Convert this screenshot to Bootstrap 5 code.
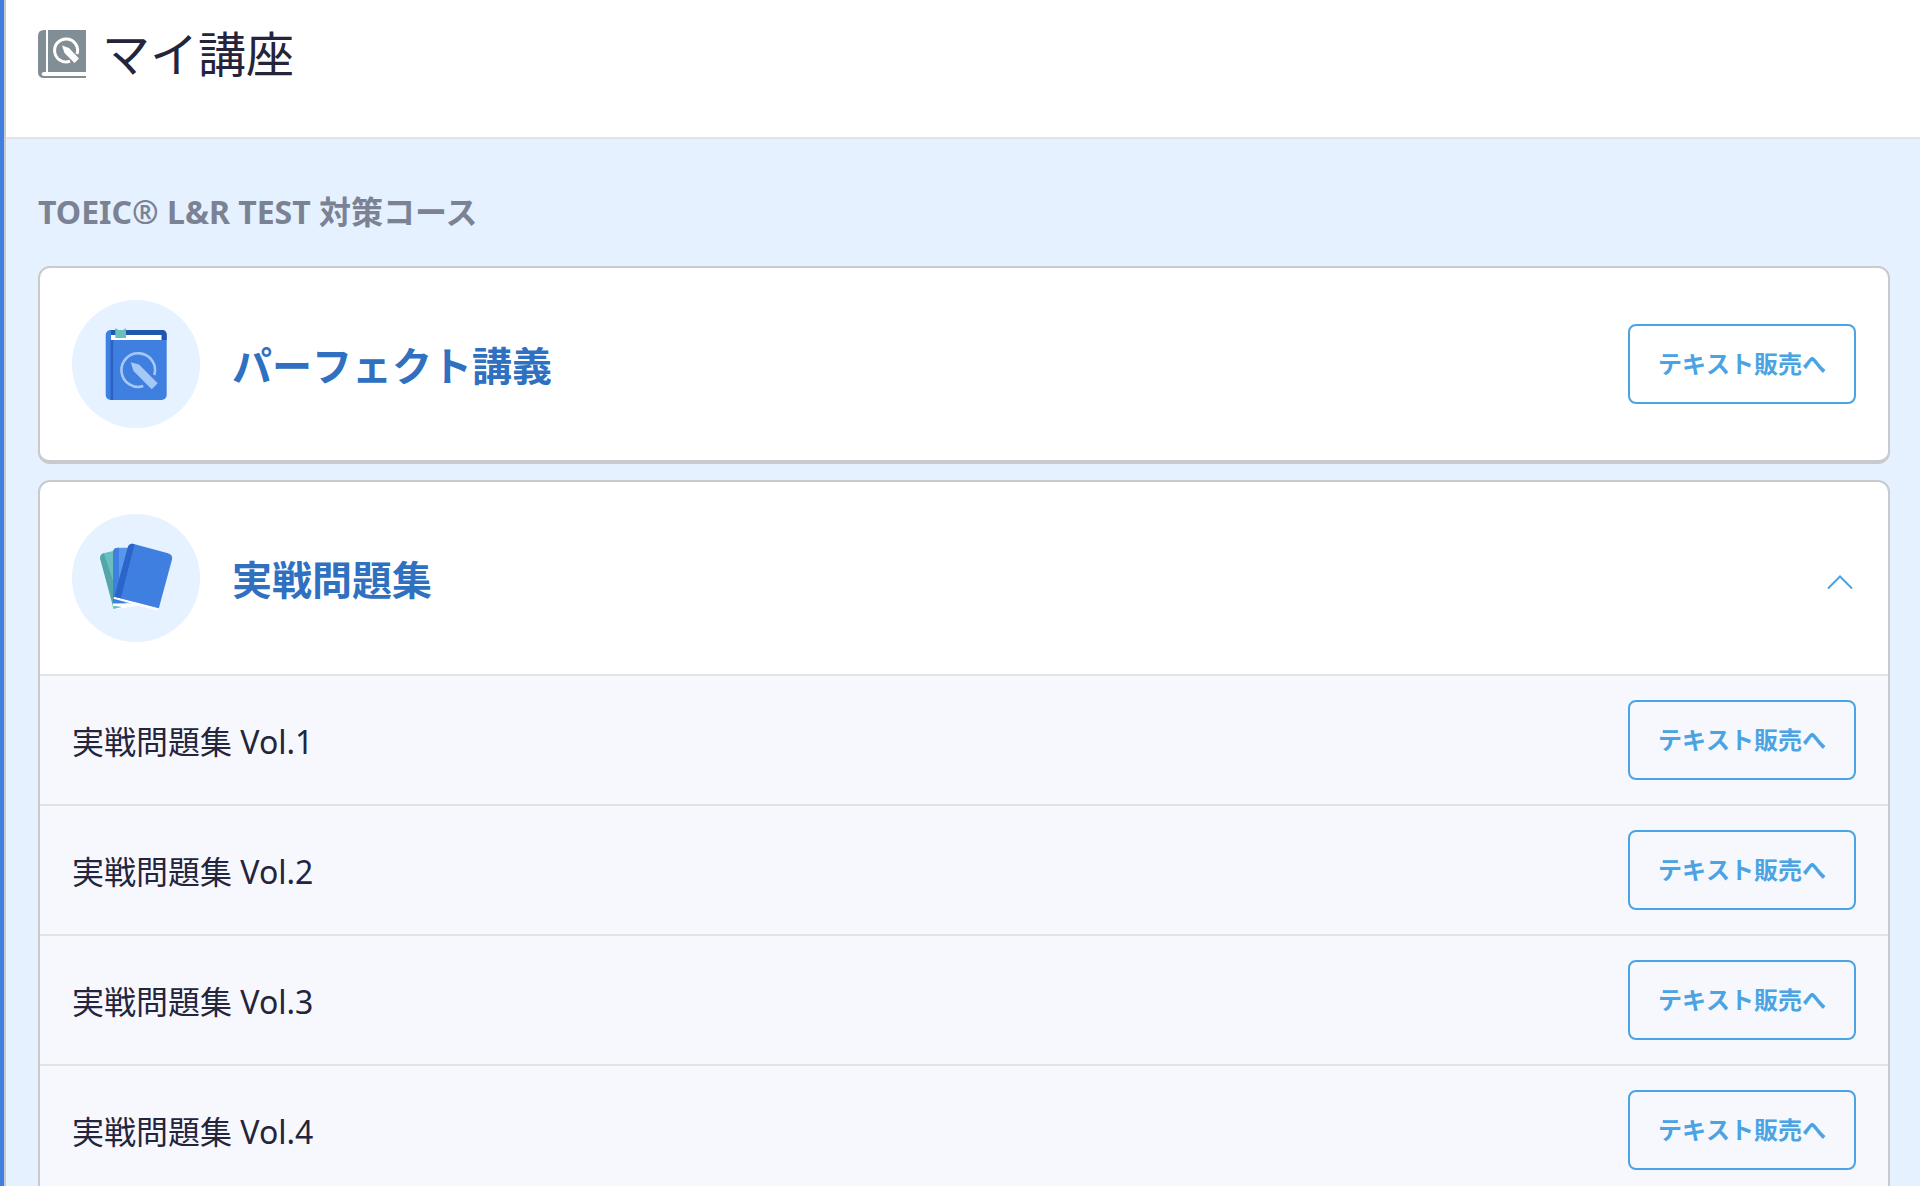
<!DOCTYPE html>
<html lang="ja">
<head>
<meta charset="utf-8">
<meta name="viewport" content="width=device-width, initial-scale=1">
<title>マイ講座</title>
<link href="https://cdn.jsdelivr.net/npm/bootstrap@5.3.0/dist/css/bootstrap.min.css" rel="stylesheet">
<style>
  body { font-family: "Noto Sans", "Noto Sans CJK JP", sans-serif; color: #24243c; background: #e5f1fe; }
  .page-shell { border-left: 4px solid #3f7fe0; }
  .page-main { border-left: 2px solid #c8cacd; }
  .page-head { padding: 18px 32px 47px; border-bottom: 2px solid #e2e3e5; }
  .page-title { font-size: 48px; line-height: 72px; font-weight: 400; }
  .page-body { padding: 49px 30px 48px 32px; }
  .course-group { font-size: 32px; line-height: 48px; font-weight: 700; color: #7a8294; margin-bottom: 30px; }
  .course-card { border: 2px solid #c8cacd; border-bottom-width: 4px; border-radius: 12px; }
  .course-head { padding: 32px; gap: 32px; }
  .course-disc { width: 128px; height: 128px; }
  .course-name { font-size: 40px; line-height: 60px; font-weight: 700; color: #3070c0; padding-top: 4px; font-kerning: none; }
  .volume-row { padding: 24px 32px; background: #f7f8fd; border-top: 2px solid #e2e3e5; font-size: 32px; line-height: 48px; }
  .volume-name { padding-top: 4px; }
  .btn-shop { --bs-btn-color: #4aa3e3; --bs-btn-border-color: #4aa3e3; --bs-btn-border-width: 2px; --bs-btn-border-radius: 8px;
    --bs-btn-hover-color: #fff; --bs-btn-hover-bg: #4aa3e3; --bs-btn-hover-border-color: #4aa3e3;
    --bs-btn-padding-x: 28px; --bs-btn-padding-y: 20px; --bs-btn-font-size: 24px; --bs-btn-font-weight: 700; line-height: 36px; font-kerning: none; }
</style>
<script src="https://cdn.jsdelivr.net/npm/bootstrap@5.3.0/dist/js/bootstrap.bundle.min.js"></script>
</head>
<body>
<div class="page-shell vh-100 overflow-hidden">
  <main class="page-main min-vh-100">
    <header class="page-head bg-white d-flex align-items-center gap-3">
      <svg width="48" height="48" viewBox="0 0 48 48" aria-hidden="true">
        <path fill="#828e96" d="M6 0h2v42H6q-2 0-2.500 2 .5 2 2.500 2h42v2H6Q0 48 0 42V6Q0 0 6 0z"/>
        <path fill="#828e96" d="M10 0h38v42H10z"/>
        <path fill="none" stroke="#fff" stroke-width="3" d="M39 24A11.500 11.500 0 1 0 32 31.200"/>
        <path fill="#fff" d="M24 15.500l7 2.500 10 10.500-4.500 4.500L26.500 23z"/>
      </svg>
      <h1 class="page-title mb-0">マイ講座</h1>
    </header>

    <div class="page-body">
      <h2 class="course-group">TOEIC® L&amp;R TEST 対策コース</h2>

      <section class="course-card bg-white overflow-hidden mb-3">
        <div class="course-head d-flex align-items-center">
          <svg class="course-disc flex-shrink-0" viewBox="0 0 128 128" aria-hidden="true">
            <circle cx="64" cy="64" r="64" fill="#e6f2ff"/>
            <rect x="33.700" y="30" width="61" height="70" rx="5" fill="#3f7fe0"/>
            <path fill="#2156ac" d="M39 30h51q4.700 0 4.700 5v5H39z"/>
            <path fill="#fff" d="M39 35h50.500v5H39z"/>
            <path fill="#2b62c4" d="M38.500 40h2.700v60h-2.700z"/>
            <path fill="#69bfbe" d="M43.300 28l3.200 2h4.500l3-2v10H43.300z"/>
            <path fill="none" stroke="#a5c8f6" stroke-width="2.600" d="M82.300 75A16.800 16.800 0 1 0 71.300 86.100"/>
            <path fill="#a5c8f6" d="M58.700 62.300l8.300 2.200L85.700 83.300l-6 6L61.500 71z"/>
          </svg>
          <h3 class="course-name mb-0 flex-grow-1">パーフェクト講義</h3>
          <a class="btn btn-shop" href="#">テキスト販売へ</a>
        </div>
      </section>

      <section class="course-card bg-white overflow-hidden">
        <div class="course-head d-flex align-items-center">
          <svg class="course-disc flex-shrink-0" viewBox="0 0 128 128" aria-hidden="true">
            <circle cx="64" cy="64" r="64" fill="#e6f2ff"/>
            <path fill="#fff" d="M41 92l28-5 3 3.500-30 5z"/>
            <path fill="#69bfbe" d="M28.300 45q-.8-4.500 3.200-5.700L43 36.500V92l7 1-8.500 2z"/>
            <path fill="#55a5aa" d="M28.300 45q-.8-4 3.500-5.700L41 67v23l1 4.500z"/>
            <path fill="#fff" d="M41 89h20v3H41z"/>
            <path fill="#5a97ec" d="M46 33.700h16V89.300H41V45z"/>
            <path fill="#3f7fe0" d="M41 38q0-4.300 5-4.300h1V89.300H41z"/>
            <path fill="#3f7fe0" d="M47 70l8 10-2 9.300h-7z"/>
            <path fill="#fff" d="M42.300 82.500L87 94.300l-2 2-14-3.500-29.500-8z"/>
            <path fill="#3f7fe0" d="M55.800 33.500q1.500-4.500 6-3.500L96 39.200q5 1.500 4 6.300L86.800 94.300 42.300 82.700z"/>
            <path fill="#2b65c9" d="M55.800 33.500q1.500-4.500 6-3.500l.8.300L48.800 84.300l-6.500-1.600z"/>
          </svg>
          <h3 class="course-name mb-0 flex-grow-1">実戦問題集</h3>
          <button type="button" class="btn p-0 border-0" data-bs-toggle="collapse" data-bs-target="#volumes" aria-expanded="true" aria-controls="volumes" aria-label="実戦問題集">
            <svg class="d-block" width="32" height="32" viewBox="0 0 32 32" aria-hidden="true"><path d="M4 26.500L16 14.500l12 12" fill="none" stroke="#4aa3e3" stroke-width="2"/></svg>
          </button>
        </div>
        <div id="volumes" class="collapse show">
          <div class="volume-row d-flex align-items-center justify-content-between"><span class="volume-name">実戦問題集 Vol.1</span><a class="btn btn-shop" href="#">テキスト販売へ</a></div>
          <div class="volume-row d-flex align-items-center justify-content-between"><span class="volume-name">実戦問題集 Vol.2</span><a class="btn btn-shop" href="#">テキスト販売へ</a></div>
          <div class="volume-row d-flex align-items-center justify-content-between"><span class="volume-name">実戦問題集 Vol.3</span><a class="btn btn-shop" href="#">テキスト販売へ</a></div>
          <div class="volume-row d-flex align-items-center justify-content-between"><span class="volume-name">実戦問題集 Vol.4</span><a class="btn btn-shop" href="#">テキスト販売へ</a></div>
        </div>
      </section>
    </div>
  </main>
</div>
</body>
</html>
